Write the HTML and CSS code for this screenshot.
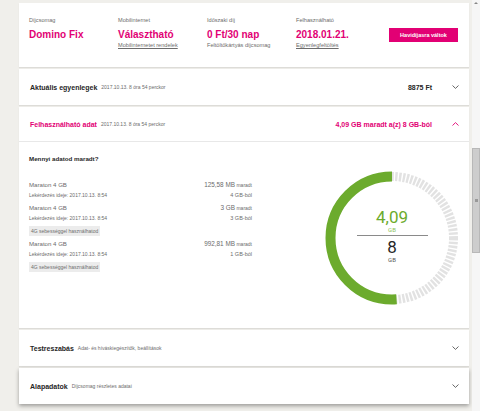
FILE: index.html
```html
<!DOCTYPE html>
<html lang="hu">
<head>
<meta charset="utf-8">
<title>Domino Fix</title>
<link rel="stylesheet" href="styles.css">
</head>
<body>
<div class="page">
  <main class="main">
    <section class="card summary">
      <div class="col"><div class="lbl">Díjcsomag</div><div class="val">Domino Fix</div></div>
      <div class="col"><div class="lbl">Mobilinternet</div><div class="val">Választható</div><a class="lnk">Mobilinternetet rendelek</a></div>
      <div class="col"><div class="lbl">Időszaki díj</div><div class="val">0 Ft/30 nap</div><div class="sub">Feltöltőkártyás díjcsomag</div></div>
      <div class="col"><div class="lbl">Felhasználható</div><div class="val">2018.01.21.</div><a class="lnk">Egyenlegfeltöltés</a></div>
      <button class="btn">Havidíjasra váltok</button>
    </section>

    <section class="card row">
      <span class="title">Aktuális egyenlegek</span>
      <span class="meta">2017.10.13. 8 óra 54 perckor</span>
      <span class="amount">8875 Ft</span>
      <svg class="chev" viewBox="0 0 7 4"><path d="M0.5 0.5 L3.5 3.4 L6.5 0.5"/></svg>
    </section>

    <section class="card data">
      <div class="row head">
        <span class="title pink">Felhasználható adat</span>
        <span class="meta">2017.10.13. 8 óra 54 perckor</span>
        <span class="amount pink">4,09 GB maradt a(z) 8 GB-ból</span>
        <svg class="chev up" viewBox="0 0 7 4"><path d="M0.5 3.5 L3.5 0.6 L6.5 3.5"/></svg>
      </div>
      <div class="body">
        <div class="list">
          <h4 class="q">Mennyi adatod maradt?</h4>
          <div class="item">
            <div class="line"><span class="name">Maraton 4 GB</span><span class="rem"><b>125,58 MB</b> maradt</span></div>
            <div class="line"><span class="when">Lekérdezés ideje: 2017.10.13. 8:54</span><span class="of">4 GB-ból</span></div>
          </div>
          <div class="item">
            <div class="line"><span class="name">Maraton 4 GB</span><span class="rem"><b>3 GB</b> maradt</span></div>
            <div class="line"><span class="when">Lekérdezés ideje: 2017.10.13. 8:54</span><span class="of">3 GB-ból</span></div>
            <span class="badge">4G sebességgel használhatod</span>
          </div>
          <div class="item">
            <div class="line"><span class="name">Maraton 4 GB</span><span class="rem"><b>992,81 MB</b> maradt</span></div>
            <div class="line"><span class="when">Lekérdezés ideje: 2017.10.13. 8:54</span><span class="of">1 GB-ból</span></div>
            <span class="badge">4G sebességgel használhatod</span>
          </div>
        </div>
        <div class="gauge">
          <svg class="ring" viewBox="-67 -67 134 134">
            <circle class="track" r="61.5"/>
            <circle class="fill" r="61.5" transform="rotate(90) scale(-1,1)"/>
          </svg>
          <div class="center">
            <div class="big green">4,09</div>
            <div class="unit green">GB</div>
            <div class="divider"></div>
            <div class="big dark">8</div>
            <div class="unit">GB</div>
          </div>
        </div>
      </div>
    </section>

    <section class="card row">
      <span class="title">Testreszabás</span>
      <span class="meta">Adat- és híváskiegészítők, beállítások</span>
      <svg class="chev push" viewBox="0 0 7 4"><path d="M0.5 0.5 L3.5 3.4 L6.5 0.5"/></svg>
    </section>

    <section class="card row raised">
      <span class="title">Alapadatok</span>
      <span class="meta">Díjcsomag részletes adatai</span>
      <svg class="chev push" viewBox="0 0 7 4"><path d="M0.5 0.5 L3.5 3.4 L6.5 0.5"/></svg>
    </section>
  </main>
  <div class="scrollbar">
    <div class="arrow"></div>
    <div class="thumb"><span class="grip"></span></div>
  </div>
</div>
</body>
</html>
```

FILE: styles.css
```css
* { box-sizing: border-box; }
html, body { margin: 0; padding: 0; }
body {
  width: 480px;
  height: 411px;
  overflow: hidden;
  background: #f0efeb;
  font-family: "Liberation Sans", Arial, sans-serif;
  color: #262626;
}
.page { display: flex; height: 411px; }
.main {
  flex: 1;
  padding: 3px 3px 0 19px;
  display: flex;
  flex-direction: column;
  gap: 2px;
}
.card {
  background: #fff;
  box-shadow: 0 1px 1px rgba(0,0,0,0.08);
}

/* summary */
.summary {
  height: 64px;
  display: flex;
  align-items: flex-start;
  padding: 13px 11px 0 10px;
}
.col { width: 89px; display: flex; flex-direction: column; }
.lbl { font-size: 5.6px; line-height: 8px; color: #6c6c6c; margin-bottom: 4px; }
.val { font-size: 10px; line-height: 13px; font-weight: bold; color: #e20074; white-space: nowrap; }
.lnk, .sub { font-size: 5.6px; line-height: 8px; color: #6c6c6c; white-space: nowrap; }
.lnk { text-decoration: underline; }
.btn {
  margin-left: auto;
  margin-top: 12px;
  width: 69px;
  height: 14px;
  border: 0;
  padding: 0;
  background: #e20074;
  color: #fff;
  font-family: "Liberation Sans", Arial, sans-serif;
  font-size: 5.5px;
  font-weight: bold;
}

/* rows */
.row {
  height: 36px;
  display: flex;
  align-items: center;
  padding: 0 10px 0 11px;
}
.title { font-size: 7px; font-weight: bold; color: #262626; white-space: nowrap; }
.meta { font-size: 5px; color: #6c6c6c; margin-left: 4px; white-space: nowrap; }
.amount { margin-left: auto; margin-right: 20px; font-size: 7px; font-weight: bold; color: #262626; white-space: nowrap; }
.pink { color: #e20074; }
.chev { width: 7px; height: 4px; flex: none; }
.chev path { fill: none; stroke: #555; stroke-width: 0.9; }
.chev.up path { stroke: #e20074; }
.chev.push { margin-left: auto; }
.raised { box-shadow: 0 2px 4px rgba(0,0,0,0.35); }

/* data card */
.data { display: flex; flex-direction: column; }
.head { height: 35px; border-bottom: 1px solid #e8e8e8; }
.body {
  height: 186px;
  display: flex;
  align-items: flex-start;
  padding: 12px 10px 0 10px;
}
.list { width: 223px; display: flex; flex-direction: column; align-items: flex-start; }
.q { margin: 0 0 16px 0; font-size: 6.2px; line-height: 10px; font-weight: bold; color: #262626; }
.item { width: 100%; display: flex; flex-direction: column; align-items: flex-start; margin-bottom: 3px; }
.line {
  width: 100%;
  display: flex;
  justify-content: space-between;
  align-items: baseline;
  line-height: 10px;
  color: #6c6c6c;
}
.name { font-size: 6.1px; }
.when { font-size: 5px; }
.rem { font-size: 5px; }
.rem b { font-weight: normal; font-size: 6.4px; }
.of { font-size: 5.5px; }
.badge {
  margin-top: 3px;
  height: 10px;
  line-height: 10px;
  padding: 0 2px;
  background: #ececec;
  font-size: 5px;
  color: #6c6c6c;
  white-space: nowrap;
}

.gauge {
  margin-left: auto;
  margin-top: 17px;
  width: 134px;
  height: 134px;
  position: relative;
}
.ring { width: 134px; height: 134px; display: block; }
.track { fill: none; stroke: #e2e2e2; stroke-width: 9; stroke-dasharray: 2.4 1.4; }
.fill { fill: none; stroke: #6cab2d; stroke-width: 10; stroke-dasharray: 197.5 400; }
.center {
  position: absolute;
  left: 0; top: 0; right: 0; bottom: 0;
  display: flex;
  flex-direction: column;
  align-items: center;
  padding-top: 37px;
}
.big { font-family: Roboto, "Liberation Sans", sans-serif; font-weight: 400; font-size: 17px; line-height: 18px; }
.unit { font-family: Roboto, "Liberation Sans", sans-serif; font-size: 6px; line-height: 8px; color: #555; }
.green { color: #6cab2d; }
.unit.green { color: #8cbf5c; }
.dark { color: #262626; margin-top: 1px; }
.divider { width: 71px; height: 1px; background: #8a8a8a; margin: 1px 0 1px; }

/* scrollbar */
.scrollbar {
  width: 8px;
  height: 411px;
  background: #f6f6f6;
  display: flex;
  flex-direction: column;
  align-items: center;
}
.arrow {
  width: 0; height: 0;
  margin-top: 2px;
  border-left: 2px solid transparent;
  border-right: 2px solid transparent;
  border-bottom: 2px solid #888;
}
.thumb {
  margin-top: 144px;
  width: 8px;
  height: 105px;
  background: #cdcdcd;
  border: 1px solid #b8b8b8;
  display: flex;
  align-items: center;
  justify-content: center;
}
.grip { width: 3px; height: 3px; background: #999; }
```
